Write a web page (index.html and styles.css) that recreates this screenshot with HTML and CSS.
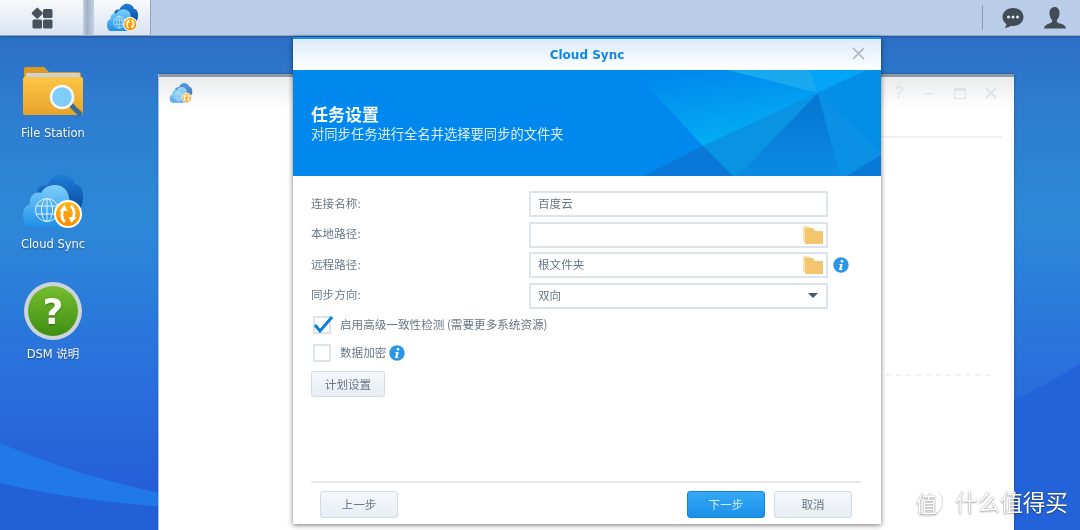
FILE: index.html
```html
<!DOCTYPE html>
<html lang="zh-CN">
<head>
    <meta charset="UTF-8">
    <meta name="viewport" content="width=device-width, initial-scale=1.0">
    <title>Cloud Sync</title>
    <link rel="stylesheet" href="styles.css">
</head>
<body>
    <!-- 共用图标 -->
    <svg class="icon-defs" width="0" height="0" aria-hidden="true">
        <defs>
            <linearGradient id="cloud-front" x1="0" y1="0" x2="0" y2="1">
                <stop offset="0" stop-color="#7fd0fb"/>
                <stop offset="1" stop-color="#1f8fe8"/>
            </linearGradient>
            <linearGradient id="cloud-back" x1="0" y1="0" x2="0" y2="1">
                <stop offset="0" stop-color="#1e7fd8"/>
                <stop offset="1" stop-color="#0b4da0"/>
            </linearGradient>
            <linearGradient id="badge-orange" x1="0" y1="0" x2="0" y2="1">
                <stop offset="0" stop-color="#ffb81c"/>
                <stop offset="1" stop-color="#f58a00"/>
            </linearGradient>
            <linearGradient id="folder-body" x1="0" y1="0" x2="0" y2="1">
                <stop offset="0" stop-color="#fdc545"/>
                <stop offset="1" stop-color="#e8a42c"/>
            </linearGradient>
            <linearGradient id="help-green" x1="0" y1="0" x2="0" y2="1">
                <stop offset="0" stop-color="#76bd2f"/>
                <stop offset="1" stop-color="#3f8f14"/>
            </linearGradient>
            <symbol id="icon-cloud-sync" viewBox="0 0 64 64">
                <path d="M16 24C16 18 22 15 26 17C29 9 37 4 44 6C50 7 53 11 54 15C60 16 63 22 62 30C62 35 60 38 58 40L20 30z" fill="url(#cloud-back)"/>
                <path d="M10 58C4 58 2 52 2 46C2 40 5 36 9 35C8 27 14 22 20 24C23 18 29 16 34 16C42 16 48 22 48 30C52 33 52 38 50 42L46 58z" fill="url(#cloud-front)"/>
                <g fill="none" stroke="#dff3ff" stroke-width="1">
                    <circle cx="26" cy="41" r="11.500"/>
                    <ellipse cx="26" cy="41" rx="5.500" ry="11.500"/>
                    <path d="M26 29.500v23M15 37h22M15 45h22"/>
                </g>
                <circle cx="47" cy="45" r="13" fill="url(#badge-orange)" stroke="#fdfdf5" stroke-width="2"/>
                <g fill="none" stroke="#fff" stroke-width="2.800">
                    <path d="M44 53c-4-3-4-10-1-14"/>
                    <path d="M50 37c4 3 4 10 1 14"/>
                </g>
                <path d="M38.500 42l5-6 3 6zM55.500 48l-5 6-3-6z" fill="#fff"/>
            </symbol>
            <symbol id="icon-small-folder" viewBox="0 0 22 20">
                <path d="M1 1h5l3 2v14H1z" fill="#f9e2ae"/>
                <path d="M3 3h8l2 3h8v13H3z" fill="#f3c66e"/>
            </symbol>
            <symbol id="icon-info" viewBox="0 0 16 16">
                <circle cx="8" cy="8" r="7.700" fill="#2a96e8"/>
                <circle cx="9" cy="4.200" r="1.300" fill="#fff"/>
                <path d="M6.500 7h3.200l-1.200 5h1l-.3 1H6l1.200-5h-1z" fill="#fff"/>
            </symbol>
        </defs>
    </svg>

    <div class="desktop">
        <!-- 壁纸波浪 -->
        <svg class="wallpaper" viewBox="0 0 1080 530" preserveAspectRatio="none" aria-hidden="true">
            <path d="M0 443C60 468 110 483 170 495C260 512 300 512 420 512V530H0z" fill="#2178e8"/>
            <path d="M0 483C60 497 110 503 170 507C260 514 300 514 420 514V530H0z" fill="#2260d8"/>
            <path d="M1014 400C1040 388 1060 376 1080 364V530H1014z" fill="#2363da"/>
        </svg>

        <header class="taskbar">
            <button class="task-btn home-btn">
                <svg width="22" height="22" viewBox="0 0 22 22">
                    <rect x="2" y="2" width="8.500" height="8.500" rx="1" transform="rotate(45 6.250 6.250)" fill="#47525c"/>
                    <rect x="12" y="2" width="9.500" height="9" rx="1.500" fill="#47525c"/>
                    <rect x="1.500" y="12.500" width="9.500" height="9" rx="1.500" fill="#47525c"/>
                    <rect x="12" y="12.500" width="9.500" height="9" rx="1.500" fill="#47525c"/>
                </svg>
            </button>
            <span class="task-gap"></span>
            <button class="task-btn app-btn">
                <svg width="33" height="33"><use href="#icon-cloud-sync"/></svg>
            </button>
            <div class="tray">
                <span class="tray-sep"></span>
                <svg class="tray-icon" width="24" height="24" viewBox="0 0 24 24">
                    <path d="M12 2C5.800 2 1.500 6 1.500 11c0 3 1.500 5.400 4 7-.2 1.500-1 3-2 4 2.500 0 5-1 6.500-2.200.6.100 1.300.2 2 .2 6.200 0 10.500-4 10.500-9S18.200 2 12 2z" fill="#414c57"/>
                    <circle cx="7.500" cy="11" r="1.500" fill="#e4ecf5"/>
                    <circle cx="12" cy="11" r="1.500" fill="#e4ecf5"/>
                    <circle cx="16.500" cy="11" r="1.500" fill="#e4ecf5"/>
                </svg>
                <svg class="tray-icon" width="24" height="24" viewBox="0 0 24 24">
                    <path d="M12 1c-3.500 0-5.500 2.500-5.500 6 0 3 1 5.500 2.600 7 .3 1.500-.1 2.400-1.600 3C5 18 1.500 19 1 22.500h22C22.500 19 19 18 15.500 17c-1.500-.6-1.900-1.500-1.600-3 1.600-1.500 2.600-4 2.600-7 0-3.500-2-6-4.500-6z" fill="#414c57"/>
                </svg>
            </div>
        </header>

        <nav class="desktop-icons">
            <div class="shortcut">
                <svg width="64" height="64" viewBox="0 0 64 64">
                    <path d="M3 11c0-1 1-2 2-2h18l5 5h29c2 0 3 1 3 3v13H3z" fill="#dd9a22"/>
                    <rect x="5" y="15" width="54" height="8" rx="1" fill="#cfd3d0"/>
                    <path d="M2 21c0-1 1-2 2-2h56c1 0 2 1 2 2v34c0 1-1 2-2 2H4c-1 0-2-1-2-2z" fill="url(#folder-body)"/>
                    <path d="M50 47l10 10" stroke="#356f93" stroke-width="5"/>
                    <circle cx="41" cy="39" r="11" fill="#7fcdfb" stroke="#f4f8fb" stroke-width="2.500"/>
                </svg>
                <span>File Station</span>
            </div>
            <div class="shortcut">
                <svg width="64" height="64"><use href="#icon-cloud-sync"/></svg>
                <span>Cloud Sync</span>
            </div>
            <div class="shortcut">
                <svg width="64" height="64" viewBox="0 0 64 64">
                    <circle cx="32" cy="32" r="29" fill="#cdd5da"/>
                    <circle cx="32" cy="32" r="25" fill="url(#help-green)"/>
                    <text x="32" y="45" text-anchor="middle" class="help-mark">?</text>
                </svg>
                <span>DSM 说明</span>
            </div>
        </nav>

        <!-- 后面的 Cloud Sync 主窗口 -->
        <section class="back-window">
            <div class="back-title">
                <svg class="back-logo" width="24" height="24"><use href="#icon-cloud-sync"/></svg>
                <div class="back-controls">
                    <span>?</span>
                    <span>–</span>
                    <span class="box-glyph"></span>
                    <span class="close-glyph">×</span>
                </div>
            </div>
            <div class="back-body">
                <div class="back-side"></div>
                <div class="back-main">
                    <div class="back-head"></div>
                    <div class="back-rows"></div>
                </div>
            </div>
        </section>

        <!-- 任务设置向导 -->
        <section class="dialog">
            <div class="dialog-title">
                <span>Cloud Sync</span>
                <svg class="dialog-close" width="13" height="13" viewBox="0 0 13 13">
                    <path d="M1 1l11 11M12 1L1 12" stroke="#b0b4b8" stroke-width="1.600"/>
                </svg>
            </div>
            <div class="banner">
                <svg class="banner-art" viewBox="0 0 588 106" aria-hidden="true">
                    <defs>
                        <linearGradient id="facet-bright" x1="0.300" y1="0" x2="0.700" y2="1">
                            <stop offset="0" stop-color="#0188ee"/>
                            <stop offset="1" stop-color="#03b2f4"/>
                        </linearGradient>
                        <linearGradient id="facet-deep" x1="0.500" y1="0" x2="0.500" y2="1">
                            <stop offset="0" stop-color="#0574cf"/>
                            <stop offset="1" stop-color="#0a8be2"/>
                        </linearGradient>
                    </defs>
                    <path d="M340 0H434L525 23L410 76z" fill="url(#facet-bright)"/>
                    <path d="M434 0H517L525 23z" fill="#1aa9ee"/>
                    <path d="M517 0H574L525 23z" fill="#04a4f9"/>
                    <path d="M574 0H588V82L525 23z" fill="#038fe6"/>
                    <path d="M410 76L525 23L445 106H440z" fill="#0a93e2"/>
                    <path d="M350 106L410 76L440 106z" fill="#0a78d8"/>
                    <path d="M525 23L445 106H547z" fill="url(#facet-deep)"/>
                    <path d="M525 23L547 106H554L588 85V82z" fill="#0a90e4"/>
                    <path d="M554 106L588 85V106z" fill="#0879d6"/>
                </svg>
                <h1>任务设置</h1>
                <p>对同步任务进行全名并选择要同步的文件夹</p>
            </div>
            <div class="dialog-body">
                <div class="form-grid">
                    <label>连接名称:</label>
                    <div class="field"><span>百度云</span></div>
                    <span></span>

                    <label>本地路径:</label>
                    <div class="field"><span></span><svg class="field-icon" width="22" height="20"><use href="#icon-small-folder"/></svg></div>
                    <span></span>

                    <label>远程路径:</label>
                    <div class="field"><span>根文件夹</span><svg class="field-icon" width="22" height="20"><use href="#icon-small-folder"/></svg></div>
                    <svg class="info" width="16" height="16"><use href="#icon-info"/></svg>

                    <label>同步方向:</label>
                    <div class="field"><span>双向</span><i class="caret"></i></div>
                    <span></span>
                </div>

                <div class="checks">
                    <div class="check-row">
                        <span class="checkbox">
                            <svg class="tick" width="20" height="18" viewBox="0 0 20 18">
                                <path d="M2 9l5 6L19 1" fill="none" stroke="#0b7fdc" stroke-width="3"/>
                            </svg>
                        </span>
                        <span class="check-label">启用高级一致性检测 (需要更多系统资源)</span>
                    </div>
                    <div class="check-row">
                        <span class="checkbox"></span>
                        <span class="check-label">数据加密</span>
                        <svg class="info" width="16" height="16"><use href="#icon-info"/></svg>
                    </div>
                    <div class="plan-row"><button class="btn">计划设置</button></div>
                </div>
            </div>
            <div class="dialog-footer">
                <button class="btn btn-wide">上一步</button>
                <div class="footer-right">
                    <button class="btn btn-wide btn-primary">下一步</button>
                    <button class="btn btn-wide">取消</button>
                </div>
            </div>
        </section>

        <!-- 水印 -->
        <div class="watermark">
            <span class="wm-seal">值</span>
            <span class="wm-text">什么值得买</span>
        </div>
    </div>
</body>
</html>
```

FILE: styles.css
```css
:root {
    --text-color: #687684;
    --border-color: #dde3ea;
    --cjk-font: "Noto Sans CJK SC", sans-serif;
    --latin-font: "DejaVu Sans", "Noto Sans CJK SC", sans-serif;
}
html, body {
    margin: 0;
    padding: 0;
    height: 100%;
    overflow: hidden;
}
body {
    font-family: var(--cjk-font);
    font-size: 11.6px;
    color: var(--text-color);
}
.icon-defs {
    position: absolute;
}
.desktop {
    position: relative;
    width: 1080px;
    height: 530px;
    overflow: hidden;
    background: linear-gradient(180deg, #2b68c0 0%, #2d7dd0 20%, #2d88d8 42%, #2a72dc 68%, #2259d6 100%);
    filter: blur(0.45px);
}
.wallpaper {
    position: absolute;
    inset: 0;
    width: 100%;
    height: 100%;
}

/* 任务栏 */
.taskbar {
    position: relative;
    display: flex;
    align-items: stretch;
    height: 35px;
    background: #b9cde9;
    border-bottom: 1px solid #8ea6c6;
    box-shadow: 0 1px 2px rgba(0,0,0,0.25);
}
.task-btn {
    display: flex;
    align-items: center;
    justify-content: center;
    padding: 0;
    border: none;
    background: linear-gradient(180deg, #f8fafc, #d9e3ef);
}
.home-btn {
    width: 83px;
}
.task-gap {
    width: 11px;
    background: linear-gradient(90deg, #c3d2e6, #a3b0c4 35%, #c3d2e6);
}
.app-btn {
    width: 57px;
    border-right: 1px solid #95a5ba;
}
.tray {
    display: flex;
    align-items: center;
    margin-left: auto;
    padding-right: 13px;
    gap: 18px;
}
.tray-sep {
    width: 1px;
    height: 25px;
    background: #8b9db4;
}

/* 桌面图标 */
.desktop-icons {
    position: absolute;
    left: 0;
    top: 58px;
    width: 106px;
    display: flex;
    flex-direction: column;
}
.shortcut {
    height: 110.5px;
    display: flex;
    flex-direction: column;
    align-items: center;
    font-family: var(--latin-font);
    font-size: 11.5px;
    line-height: 16px;
    color: #f6f9fc;
    text-shadow: 0 1px 2px rgba(0,0,0,0.35);
}
.shortcut span {
    margin-top: 3px;
}
.help-mark {
    font-family: "DejaVu Sans", sans-serif;
    font-weight: bold;
    font-size: 36px;
    fill: #fbfdf2;
}

/* 后面的窗口 */
.back-window {
    position: absolute;
    left: 159px;
    top: 74px;
    width: 855px;
    height: 470px;
    display: flex;
    flex-direction: column;
    background: #fff;
    border-top: 3px solid #8d99a5;
    box-shadow: -1px 0 0 #a9c4ea, 0 0 3px rgba(0,0,0,0.3);
}
.back-title {
    display: flex;
    align-items: center;
    justify-content: space-between;
    height: 32px;
    padding: 0 15px 0 10px;
    background: linear-gradient(180deg, #e9ebec, #fff);
}
.back-logo {
    opacity: 0.75;
}
.back-controls {
    display: flex;
    align-items: center;
    gap: 14px;
    font-family: "Liberation Sans", sans-serif;
    font-size: 16px;
    color: #dfe2e5;
}
.back-controls span {
    width: 16px;
    text-align: center;
}
.back-controls .box-glyph {
    width: 10px;
    height: 7px;
    margin: 0 3px;
    border: 1px solid #dfe2e5;
    border-top-width: 3px;
}
.back-controls .close-glyph {
    font-size: 24px;
    line-height: 16px;
}
.back-body {
    flex: 1;
    display: flex;
}
.back-side {
    width: 300px;
}
.back-main {
    flex: 1;
    padding-right: 12px;
}
.back-head {
    height: 27px;
    border-bottom: 2px solid #f2f2f2;
}
.back-rows {
    height: 236px;
    margin-right: 11px;
    border-bottom: 2px dashed #f3f3f3;
}

/* 向导对话框 */
.dialog {
    position: absolute;
    left: 293px;
    top: 37px;
    width: 588px;
    height: 487px;
    display: flex;
    flex-direction: column;
    background: #fff;
    border-top: 2px solid #1a8ee8;
    box-sizing: border-box;
    box-shadow: 0 1px 5px rgba(0,0,0,0.55);
}
.dialog-title {
    position: relative;
    flex: none;
    height: 31px;
    display: flex;
    align-items: center;
    justify-content: center;
    background: linear-gradient(180deg, #dcebfa, #fff);
    font-family: var(--latin-font);
    font-size: 12px;
    font-weight: bold;
    color: #0f87e2;
}
.dialog-close {
    position: absolute;
    right: 16px;
    top: 8px;
}
.banner {
    position: relative;
    flex: none;
    height: 106px;
    box-sizing: border-box;
    padding: 33px 18px 0;
    background: #0188ee;
    color: #dcedfb;
}
.banner-art {
    position: absolute;
    inset: 0;
    width: 100%;
    height: 100%;
}
.banner h1, .banner p {
    position: relative;
    margin: 0;
}
.banner h1 {
    font-size: 17px;
    line-height: 22px;
    font-weight: bold;
    color: #f4f9fe;
}
.banner p {
    font-size: 13.3px;
    line-height: 18px;
}
.dialog-body {
    flex: 1;
    padding: 15px 18px 0;
}
.form-grid {
    display: grid;
    grid-template-columns: 218px 299px 21px;
    grid-auto-rows: 26px;
    row-gap: 4.5px;
    align-items: center;
}
.form-grid label {
    padding-bottom: 3px;
}
.field {
    height: 26px;
    box-sizing: border-box;
    display: flex;
    align-items: center;
    justify-content: space-between;
    padding: 0 2px 0 7px;
    border: 2px solid var(--border-color);
}
.field span {
    padding-bottom: 2px;
}
.caret {
    width: 0;
    height: 0;
    margin-right: 6px;
    border-left: 5px solid transparent;
    border-right: 5px solid transparent;
    border-top: 5px solid #4a5560;
}
.info {
    justify-self: end;
}
.checks {
    display: flex;
    flex-direction: column;
    gap: 10px;
    margin-top: 7.5px;
}
.check-row {
    display: flex;
    align-items: center;
    height: 18px;
    padding-left: 2px;
}
.check-label {
    padding-bottom: 2px;
}
.checkbox {
    position: relative;
    width: 18px;
    height: 18px;
    box-sizing: border-box;
    margin-right: 9px;
    border: 2px solid var(--border-color);
}
.tick {
    position: absolute;
    left: -2px;
    top: -2px;
}
.check-row .info {
    margin-left: 3px;
}
.plan-row {
    margin-top: -1px;
}
.btn {
    height: 26px;
    width: 74px;
    padding: 0 0 1px;
    font-family: var(--cjk-font);
    font-size: 11.6px;
    color: var(--text-color);
    background: linear-gradient(180deg, #f5f8fb, #e8eef4);
    border: 1px solid #cfdae5;
    border-radius: 3px;
}
.btn-wide {
    width: 78px;
    height: 27px;
}
.btn-primary {
    color: #d9effd;
    background: linear-gradient(180deg, #35a8f6, #1b90e8);
    border-color: #1583d8;
}
.dialog-footer {
    flex: none;
    display: flex;
    justify-content: space-between;
    margin: 0 20px 0 18px;
    padding: 8px 9px 6px;
    border-top: 2px solid #e8e8e8;
}
.footer-right {
    display: flex;
    gap: 9px;
}

/* 水印 */
.watermark {
    position: absolute;
    left: 913px;
    top: 487px;
    display: flex;
    align-items: center;
    gap: 12px;
    color: #fff;
    text-shadow: 0 0 1px rgba(0,0,0,0.5), 0 1px 2px rgba(0,0,0,0.3);
}
.wm-seal {
    width: 28px;
    height: 28px;
    box-sizing: content-box;
    display: flex;
    align-items: center;
    justify-content: center;
    border: 1px solid #d8d8d8;
    border-left-color: transparent;
    border-top-color: transparent;
    border-radius: 50%;
    font-size: 22px;
    text-indent: -3px;
}
.wm-text {
    font-size: 22.6px;
    line-height: 28px;
}
```
